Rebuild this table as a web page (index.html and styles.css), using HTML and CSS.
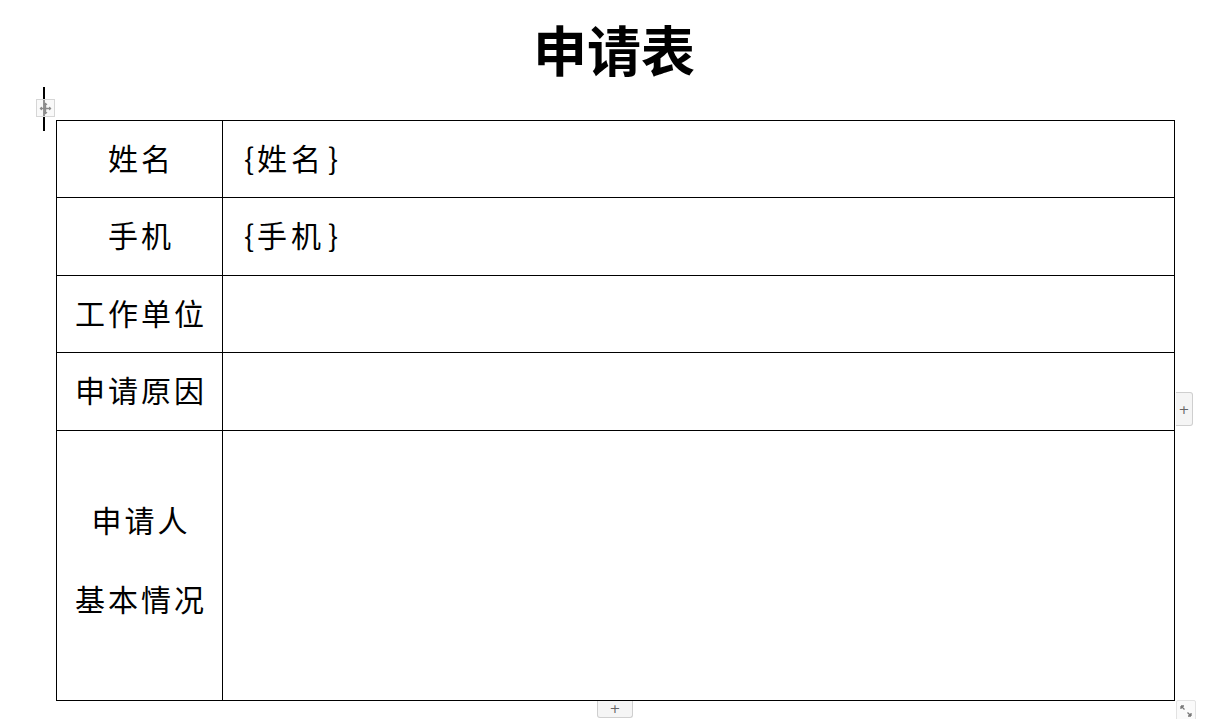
FILE: index.html
```html
<!DOCTYPE html>
<html lang="zh-CN">
<head>
<meta charset="utf-8">
<title>申请表</title>
<link rel="stylesheet" href="styles.css">
</head>
<body>
<h1 class="title">申请表</h1>
<div class="table-wrap">
  <span class="caret"></span>
  <span class="move-handle">
    <svg width="13" height="13" viewBox="0 0 13 13"><path d="M6.5 1 L6.5 12 M1 6.5 L12 6.5" stroke="#8a8a8a" stroke-width="1.4" fill="none"/><path d="M6.5 0.5 L4.5 3 L8.5 3 Z M6.5 12.5 L4.5 10 L8.5 10 Z M0.5 6.5 L3 4.5 L3 8.5 Z M12.5 6.5 L10 4.5 L10 8.5 Z" fill="#8a8a8a"/></svg>
  </span>
  <table class="form">
    <colgroup><col class="c-label"><col></colgroup>
    <tr class="r1"><th>姓名</th><td><span class="brace">{</span>姓名<span class="brace">}</span></td></tr>
    <tr class="r2"><th>手机</th><td><span class="brace">{</span>手机<span class="brace">}</span></td></tr>
    <tr class="r3"><th>工作单位</th><td></td></tr>
    <tr class="r4"><th>申请原因</th><td></td></tr>
    <tr class="r5"><th class="multi">申请人<br>基本情况</th><td></td></tr>
  </table>
  <span class="add-col">+</span>
  <span class="add-row">+</span>
  <span class="resize">
    <svg width="12" height="12" viewBox="0 0 12 12"><path d="M1 1 L4.5 4.5 M1 1 L4 1 M1 1 L1 4 M11 11 L7.5 7.5 M11 11 L8 11 M11 11 L11 8" stroke="#777" stroke-width="1.3" fill="none"/></svg>
  </span>
</div>
</body>
</html>
```
FILE: styles.css
```css
html, body {
  margin: 0;
  padding: 0;
  background: #ffffff;
}
body {
  width: 1232px;
  height: 719px;
  overflow: hidden;
  font-family: "Noto Sans CJK SC", "Noto Sans", sans-serif;
  color: #000;
}
.title {
  margin: 0 0 41px 0;
  padding-top: 19px;
  height: 60px;
  line-height: 60px;
  font-size: 54px;
  font-weight: 700;
  text-align: center;
  transform: translateX(-2px);
}
.table-wrap {
  position: relative;
  margin-left: 56px;
  width: 1119px;
}
.form {
  border-collapse: collapse;
  table-layout: fixed;
  width: 1119px;
}
.form col.c-label {
  width: 166px;
}
.form th, .form td {
  border: 1px solid #000;
  padding: 0 0 5px 0;
  font-size: 30px;
  font-weight: 400;
  vertical-align: middle;
}
.form th {
  text-align: center;
  letter-spacing: 3px;
  padding-left: 3px;
  line-height: 40px;
}
.form td {
  text-align: left;
  padding-left: 18px;
  letter-spacing: 4px;
  line-height: 40px;
}
.brace {
  display: inline-block;
  letter-spacing: 0;
  width: 16px;
  text-align: center;
}
.brace + br, .form td .brace:first-child {
  margin-right: 0;
}
.r1 { height: 77px; }
.r2 { height: 78px; }
.r3 { height: 77px; }
.r4 { height: 78px; }
.r5 { height: 270px; }
.form th.multi {
  line-height: 79px;
  padding-bottom: 13px;
}
.caret {
  position: absolute;
  left: -13px;
  top: -33px;
  width: 2px;
  height: 44px;
  background: #000;
}
.move-handle {
  position: absolute;
  left: -20px;
  top: -21px;
  width: 17px;
  height: 16px;
  border: 1px solid #d6d6d6;
  background: rgba(245,245,245,0.6);
  display: flex;
  align-items: center;
  justify-content: center;
}
.add-col {
  position: absolute;
  left: 1120px;
  top: 272px;
  width: 16px;
  height: 32px;
  border: 1px solid #cfcfcf;
  border-left: none;
  border-radius: 0 3px 3px 0;
  background: #f5f5f5;
  color: #666;
  font-family: "DejaVu Sans", sans-serif;
  font-size: 13px;
  display: flex;
  align-items: center;
  justify-content: center;
}
.add-row {
  position: absolute;
  left: 541px;
  top: 581px;
  width: 34px;
  height: 16px;
  border: 1px solid #cfcfcf;
  border-top: none;
  border-radius: 0 0 3px 3px;
  background: #f5f5f5;
  color: #666;
  font-family: "DejaVu Sans", sans-serif;
  font-size: 13px;
  line-height: 14px;
  display: flex;
  align-items: center;
  justify-content: center;
}
.resize {
  position: absolute;
  left: 1120px;
  top: 580px;
  width: 18px;
  height: 19px;
  border: 1px solid #e2e2e2;
  border-radius: 2px;
  background: #fafafa;
  display: flex;
  align-items: center;
  justify-content: center;
}
```
